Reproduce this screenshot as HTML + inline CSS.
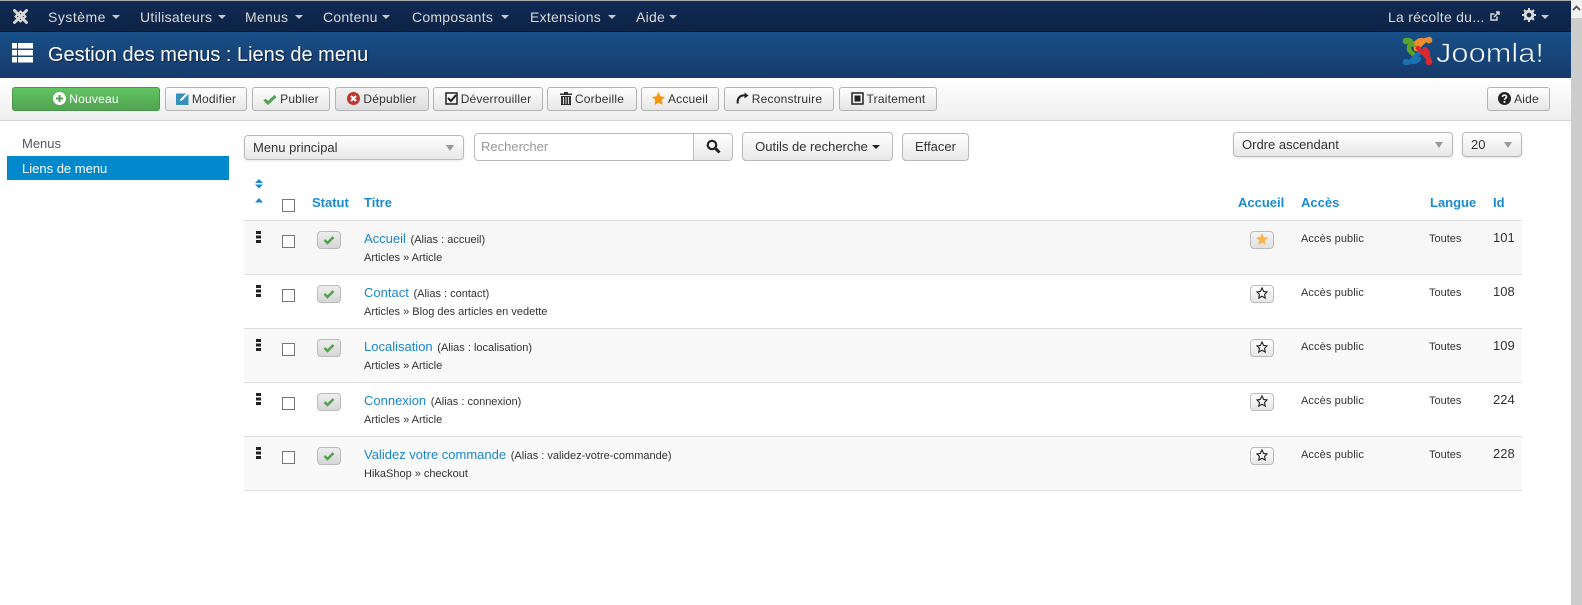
<!DOCTYPE html>
<html lang="fr"><head><meta charset="utf-8"><title>Gestion des menus</title>
<style>
*{box-sizing:border-box}
html,body{margin:0;padding:0;width:1582px;height:605px;overflow:hidden;background:#fff;font-family:"Liberation Sans",Arial,sans-serif;color:#333}
.a{position:absolute;white-space:nowrap}
#nav{left:0;top:0;width:1571px;height:32px;background:linear-gradient(#0f2a55,#0e2446);border-top:1px solid #a9a9a9;border-bottom:1px solid #0a1a36}
.n{position:absolute;top:8px;font-size:14px;line-height:16px;color:#d9d9d9;white-space:nowrap;letter-spacing:.25px}
.car{position:absolute;top:14px;width:0;height:0;border:4px solid transparent;border-top-color:#c9c9c9;border-bottom:0}
#head{left:0;top:32px;width:1571px;height:46px;background:linear-gradient(#175088,#173a6b)}
#title{left:48px;top:11px;font-size:20px;line-height:24px;color:#fff;text-shadow:1px 1px 1px rgba(0,0,0,.5)}
#tb{left:0;top:78px;width:1571px;height:43px;background:linear-gradient(#fff,#efefef);border-bottom:1px solid #d4d4d4}
.b{position:absolute;height:24px;top:9px;border:1px solid #b3b3b3;border-radius:3px;background:linear-gradient(#fff,#e6e6e6);font-size:12px;line-height:22px;color:#333;text-align:center;white-space:nowrap;letter-spacing:.2px}
.b svg{vertical-align:-2px;margin-right:3px}
.g{background:linear-gradient(#62c462,#51a351);border-color:#4a934a;color:#fff}
.dep{background:linear-gradient(#f2f2f2,#dedede)}
.f{position:absolute;border:1px solid #b9b9b9;border-radius:4px;background:linear-gradient(#fff,#e8e8e8);font-size:13px;color:#333;white-space:nowrap}
.sel{height:25px;line-height:24px;padding-left:8px;box-shadow:0 1px 2px rgba(0,0,0,.1)}
.sel i{position:absolute;right:9px;top:9px;width:0;height:0;border:4px solid transparent;border-top:6px solid #999;border-bottom:0}
.th{position:absolute;top:195px;font-size:13px;line-height:16px;font-weight:bold;color:#1a8ad0}
.row{position:absolute;left:244px;width:1278px;height:54px;border-bottom:1px solid #ddd}
.row>*{position:absolute;white-space:nowrap}
.grip{left:12px;top:10px;width:5px;height:12px;background:repeating-linear-gradient(#222 0,#222 3px,#fff 3px,#fff 4.500px)}
.cb{left:38px;top:14px;width:13px;height:13px;border:1px solid #767676;background:#fff}
.st{left:73px;top:10px;width:24px;height:18px;border:1px solid #bbb;border-radius:4px;background:linear-gradient(#eee,#d6d6d6);text-align:center}
.l{left:120px;top:10px;font-size:13px;line-height:15px;color:#333}
.l b{font-weight:normal;font-size:13px;color:#1a86cc;margin-right:1px}
.l span{font-size:11px}
.s{left:120px;top:30px;font-size:11px;line-height:14px;color:#333}
.h{left:1006px;top:10px;width:24px;height:18px;border:1px solid #bbb;border-radius:4px;background:linear-gradient(#fff,#e6e6e6);text-align:center}
.ac{left:1057px;top:11px;font-size:11px;line-height:14px;letter-spacing:.1px}
.la{left:1185px;top:11px;font-size:11px;line-height:14px}
.id{left:1249px;top:9px;font-size:13px;line-height:16px}
</style></head><body>

<div id="nav" class="a">
<svg class="a" style="left:12px;top:7px" width="17" height="17" viewBox="0 0 17 17" fill="none" stroke="#d8d8d8" stroke-width="3" stroke-linecap="round"><path d="M2.500 2.500 L14.500 14.500 M14.500 2.500 L2.500 14.500"/><path d="M8.500 3.500 L13.500 8.500 L8.500 13.500 L3.500 8.500Z" stroke-width="2"/></svg>
<span class="n" style="left:48px;letter-spacing:.5px">Système</span><i class="car" style="left:112px"></i>
<span class="n" style="left:140px">Utilisateurs</span><i class="car" style="left:218px"></i>
<span class="n" style="left:245px">Menus</span><i class="car" style="left:295px"></i>
<span class="n" style="left:323px">Contenu</span><i class="car" style="left:382px"></i>
<span class="n" style="left:412px">Composants</span><i class="car" style="left:501px"></i>
<span class="n" style="left:530px">Extensions</span><i class="car" style="left:608px"></i>
<span class="n" style="left:636px">Aide</span><i class="car" style="left:669px"></i>
<span class="n" style="left:1388px">La récolte du...</span>
<svg class="a" style="left:1490px;top:10px" width="10" height="10" viewBox="0 0 10 10" fill="none" stroke="#d9d9d9" stroke-width="1.500"><path d="M7 5.500V9H1V3H4.500"/><path d="M4 6L9 1M6 1H9V4"/></svg>
<svg class="a" style="left:1522px;top:7px" width="14" height="14" viewBox="0 0 14 14"><circle cx="7" cy="7" r="3.800" fill="none" stroke="#d9d9d9" stroke-width="3"/><path d="M7 0V14M0 7H14M2 2L12 12M12 2L2 12" stroke="#d9d9d9" stroke-width="2" stroke-dasharray="2.500 9"/></svg>
<i class="car" style="left:1541px"></i>
</div>

<div id="head" class="a">
<svg class="a" style="left:12px;top:11px" width="21" height="21" viewBox="0 0 21 21" fill="#fff"><rect x="0" y="0" width="5" height="5.500"/><rect x="6" y="0" width="15" height="5.500"/><rect x="0" y="7" width="5" height="5.500"/><rect x="6" y="7" width="15" height="5.500"/><rect x="0" y="14" width="5" height="5.500"/><rect x="6" y="14" width="15" height="5.500"/></svg>
<div id="title" class="a">Gestion des menus : Liens de menu</div>
<svg class="a" style="left:1402px;top:3px" width="31" height="32" viewBox="0 0 31 32" fill="none" stroke-width="4.500" stroke-linecap="round" stroke-linejoin="round">
<path d="M4 6 C7 4 9 6 10 8 L17 15" stroke="#5aa32c"/><path d="M10 8 C6 11 6 15 9 17 L12 20" stroke="#5aa32c"/><circle cx="4" cy="6" r="3.300" fill="#5aa32c"/>
<path d="M27 5 C25 4 23 5 22 6 L14 14" stroke="#f08c2a"/><path d="M22 6 C19 4 16 6 14 8" stroke="#f08c2a"/><circle cx="27" cy="5" r="3.300" fill="#f08c2a"/>
<path d="M4 27 C6 28 8 27 9 26 L17 18" stroke="#1c71b4"/><path d="M9 26 C12 28 15 26 17 24" stroke="#1c71b4"/><circle cx="4" cy="27" r="3.300" fill="#1c71b4"/>
<path d="M27 27 C28 25 27 23 25 22 L16 13" stroke="#d9282f"/><path d="M25 22 C27 19 25 16 23 14" stroke="#d9282f"/><circle cx="27" cy="27" r="3.300" fill="#d9282f"/>
</svg>
<svg class="a" style="left:1436px;top:4px" width="112" height="34" viewBox="0 0 112 34"><text x="0" y="26" font-family="'Liberation Sans',sans-serif" font-size="27" fill="#fff" stroke="#17487e" stroke-width=".7" textLength="108" lengthAdjust="spacingAndGlyphs">Joomla!</text></svg>
</div>

<div id="tb" class="a">
<div class="b g" style="left:12px;width:148px"><svg width="13" height="13" viewBox="0 0 13 13"><circle cx="6.500" cy="6.500" r="6.500" fill="#fff"/><path d="M6.500 3V10M3 6.500H10" stroke="#51a351" stroke-width="2"/></svg>Nouveau</div>
<div class="b" style="left:165px;width:82px"><svg width="13" height="13" viewBox="0 0 13 13"><path d="M0 1.500H11L12.500 3V13H0Z" fill="#378fbc"/><path d="M4.500 8.500L11 2" stroke="#fff" stroke-width="2"/></svg>Modifier</div>
<div class="b" style="left:252px;width:78px"><svg width="14" height="11" viewBox="0 0 14 11"><path d="M1.500 5.500L5 9L12.500 2" fill="none" stroke="#51a351" stroke-width="3"/></svg>Publier</div>
<div class="b dep" style="left:335px;width:94px"><svg width="13" height="13" viewBox="0 0 13 13"><circle cx="6.500" cy="6.500" r="6.500" fill="#bd362f"/><path d="M4 4L9 9M9 4L4 9" stroke="#fff" stroke-width="2"/></svg>Dépublier</div>
<div class="b" style="left:433px;width:110px"><svg width="13" height="13" viewBox="0 0 13 13" fill="none"><rect x="1" y="1" width="11" height="11" stroke="#222" stroke-width="1.500"/><path d="M3 6L6 9L11 3" stroke="#222" stroke-width="2"/></svg>Déverrouiller</div>
<div class="b" style="left:547px;width:90px"><svg width="12" height="13" viewBox="0 0 12 13"><path d="M0 1.500H12V3H0ZM4 0H8V1.500H4ZM1 4H11V13H1Z" fill="#333"/><path d="M3.500 5V12M6 5V12M8.500 5V12" stroke="#ddd"/></svg>Corbeille</div>
<div class="b" style="left:641px;width:78px"><svg width="13" height="13" viewBox="0 0 13 13"><path d="M6.500 0L8.500 4.400L13 5L9.700 8.100L10.500 13L6.500 10.600L2.500 13L3.300 8.100L0 5L4.500 4.400Z" fill="#f89406"/></svg>Accueil</div>
<div class="b" style="left:724px;width:110px"><svg width="13" height="13" viewBox="0 0 13 13" fill="none"><path d="M1.800 11.500C0.800 6 4.500 2.800 9 3.500" stroke="#222" stroke-width="2"/><path d="M8.500 0.500L12.500 3.500L8.500 6.500Z" fill="#222"/></svg>Reconstruire</div>
<div class="b" style="left:839px;width:98px"><svg width="13" height="13" viewBox="0 0 13 13"><rect x="1" y="1" width="11" height="11" fill="none" stroke="#222" stroke-width="1.500"/><rect x="3.500" y="3.500" width="6" height="6" fill="#222"/></svg>Traitement</div>
<div class="b" style="left:1487px;width:63px"><svg width="13" height="13" viewBox="0 0 13 13"><circle cx="6.500" cy="6.500" r="6.500" fill="#222"/><path d="M4.500 5C4.500 2.500 8.500 2.500 8.500 5C8.500 6.300 6.500 6.300 6.500 8" fill="none" stroke="#fff" stroke-width="1.600"/><rect x="5.600" y="9" width="1.800" height="1.800" fill="#fff"/></svg>Aide</div>
</div>

<div class="a" style="left:22px;top:136px;font-size:13px;line-height:16px;color:#555">Menus</div>
<div class="a" style="left:7px;top:156px;width:222px;height:24px;background:#0088cc;color:#fff;font-size:13px;line-height:25px;padding-left:15px">Liens de menu</div>

<div class="f sel" style="left:244px;top:135px;width:220px">Menu principal<i></i></div>
<div class="f" style="left:474px;top:133px;width:220px;height:28px;background:#fff;border-radius:4px 0 0 4px;color:#999;line-height:26px;padding-left:6px">Rechercher</div>
<div class="f" style="left:693px;top:133px;width:40px;height:28px;border-radius:0 4px 4px 0"><svg class="a" style="left:12px;top:5px" width="15" height="15" viewBox="0 0 15 15" fill="none" stroke="#222"><circle cx="6" cy="6" r="4.200" stroke-width="2.200"/><path d="M9.500 9.500L13.500 13.500" stroke-width="3"/></svg></div>
<div class="f" style="left:742px;top:132px;width:151px;height:29px;line-height:27px;text-align:center">Outils de recherche<i style="display:inline-block;width:0;height:0;border:4px solid transparent;border-top-color:#222;border-bottom:0;margin-left:4px;vertical-align:2px"></i></div>
<div class="f" style="left:902px;top:133px;width:67px;height:28px;line-height:26px;text-align:center">Effacer</div>
<div class="f sel" style="left:1233px;top:132px;width:220px">Ordre ascendant<i></i></div>
<div class="f sel" style="left:1462px;top:132px;width:60px">20<i></i></div>

<svg class="a" style="left:254px;top:179px" width="10" height="30" viewBox="0 0 10 30" fill="#1a8ad0"><path d="M5 0L9 4H1ZM1 5.500H9L5 9.500ZM5 19L9 23.500H1Z"/></svg>
<div class="a" style="left:282px;top:199px;width:13px;height:13px;border:1px solid #767676;background:#fff"></div>
<div class="th" style="left:312px">Statut</div>
<div class="th" style="left:364px">Titre</div>
<div class="th" style="left:1238px">Accueil</div>
<div class="th" style="left:1301px">Accès</div>
<div class="th" style="left:1430px">Langue</div>
<div class="th" style="left:1493px">Id</div>
<div class="a" style="left:244px;top:220px;width:1278px;height:1px;background:#ddd"></div>

<div class="row" style="top:221px;background:#f7f7f7"><div class="grip"></div><div class="cb"></div><div class="st"><svg width="12" height="10" viewBox="0 0 12 10"><path d="M1.500 5L4.500 8L10.500 2" fill="none" stroke="#51a351" stroke-width="2.500"/></svg></div><div class="l"><b>Accueil</b> <span>(Alias : accueil)</span></div><div class="s">Articles » Article</div><div class="h" style="background:linear-gradient(#f4f4f4,#e0e0e0)"><svg width="12" height="12" viewBox="0 0 13 13"><path d="M6.500 0L8.500 4.400L13 5L9.700 8.100L10.500 13L6.500 10.600L2.500 13L3.300 8.100L0 5L4.500 4.400Z" fill="#fbb450"/></svg></div><div class="ac">Accès public</div><div class="la">Toutes</div><div class="id">101</div></div>

<div class="row" style="top:275px"><div class="grip"></div><div class="cb"></div><div class="st"><svg width="12" height="10" viewBox="0 0 12 10"><path d="M1.500 5L4.500 8L10.500 2" fill="none" stroke="#51a351" stroke-width="2.500"/></svg></div><div class="l"><b>Contact</b> <span>(Alias : contact)</span></div><div class="s">Articles » Blog des articles en vedette</div><div class="h"><svg width="12" height="12" viewBox="0 0 13 13"><path d="M6.500 1L8.300 4.800L12 5.300L9.300 8L10 12L6.500 10L3 12L3.700 8L1 5.300L4.700 4.800Z" fill="none" stroke="#222" stroke-width="1.200"/></svg></div><div class="ac">Accès public</div><div class="la">Toutes</div><div class="id">108</div></div>

<div class="row" style="top:329px;background:#f9f9f9"><div class="grip"></div><div class="cb"></div><div class="st"><svg width="12" height="10" viewBox="0 0 12 10"><path d="M1.500 5L4.500 8L10.500 2" fill="none" stroke="#51a351" stroke-width="2.500"/></svg></div><div class="l"><b>Localisation</b> <span>(Alias : localisation)</span></div><div class="s">Articles » Article</div><div class="h"><svg width="12" height="12" viewBox="0 0 13 13"><path d="M6.500 1L8.300 4.800L12 5.300L9.300 8L10 12L6.500 10L3 12L3.700 8L1 5.300L4.700 4.800Z" fill="none" stroke="#222" stroke-width="1.200"/></svg></div><div class="ac">Accès public</div><div class="la">Toutes</div><div class="id">109</div></div>

<div class="row" style="top:383px"><div class="grip"></div><div class="cb"></div><div class="st"><svg width="12" height="10" viewBox="0 0 12 10"><path d="M1.500 5L4.500 8L10.500 2" fill="none" stroke="#51a351" stroke-width="2.500"/></svg></div><div class="l"><b>Connexion</b> <span>(Alias : connexion)</span></div><div class="s">Articles » Article</div><div class="h"><svg width="12" height="12" viewBox="0 0 13 13"><path d="M6.500 1L8.300 4.800L12 5.300L9.300 8L10 12L6.500 10L3 12L3.700 8L1 5.300L4.700 4.800Z" fill="none" stroke="#222" stroke-width="1.200"/></svg></div><div class="ac">Accès public</div><div class="la">Toutes</div><div class="id">224</div></div>

<div class="row" style="top:437px;background:#f9f9f9"><div class="grip"></div><div class="cb"></div><div class="st"><svg width="12" height="10" viewBox="0 0 12 10"><path d="M1.500 5L4.500 8L10.500 2" fill="none" stroke="#51a351" stroke-width="2.500"/></svg></div><div class="l"><b>Validez votre commande</b> <span>(Alias : validez-votre-commande)</span></div><div class="s">HikaShop » checkout</div><div class="h"><svg width="12" height="12" viewBox="0 0 13 13"><path d="M6.500 1L8.300 4.800L12 5.300L9.300 8L10 12L6.500 10L3 12L3.700 8L1 5.300L4.700 4.800Z" fill="none" stroke="#222" stroke-width="1.200"/></svg></div><div class="ac">Accès public</div><div class="la">Toutes</div><div class="id">228</div></div>

<div class="a" style="left:1571px;top:0;width:11px;height:605px;background:#cdcdcd"></div>
<div class="a" style="left:1571px;top:0;width:11px;height:18px;background:#f1f1f1"><svg class="a" style="left:1px;top:5px" width="9" height="6" viewBox="0 0 9 6"><path d="M1 5L4.500 1.500L8 5" fill="none" stroke="#505050" stroke-width="1.700"/></svg></div>
</body></html>
